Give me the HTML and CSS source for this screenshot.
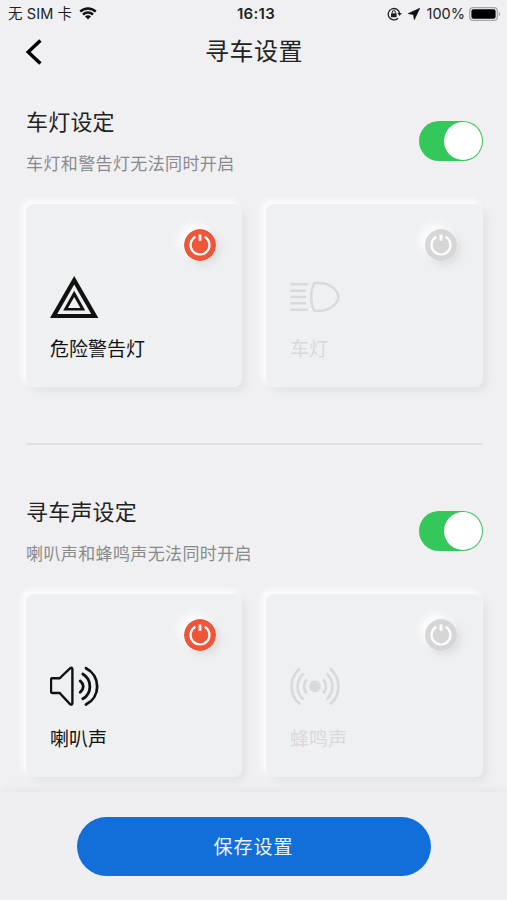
FILE: index.html
```
<!DOCTYPE html>
<html lang="zh-CN">

<head>
    <meta charset="UTF-8">
    <meta name="viewport" content="width=device-width, initial-scale=1.0">
    <title>寻车设置</title>

    <link rel="stylesheet" href="styles.css">
</head>

<body>
    <svg class="defs">
        <symbol id="power" viewBox="0 0 32 32">
            <circle cx="16" cy="16" r="16" fill="currentColor" />
            <path class="ring" d="M11.4 7.7a9.5 9.5 0 1 0 9.2 0" />
            <path class="bar" d="M16 5.4v6.4" />
        </symbol>
    </svg>

    <div class="status">
        <div class="left">
            <span>无 SIM 卡</span>
            <svg class="wifi" width="18" height="13" viewBox="0 0 18 13">
                <path d="M1.2 4.7a11 11 0 0 1 15.6 0M4 7.6a7 7 0 0 1 10 0" fill="none" stroke="#111" stroke-width="2.4" />
                <path d="M9 12.6L6 9.6a4.2 4.2 0 0 1 6 0z" fill="#111" />
            </svg>
        </div>
        <div class="time">16:13</div>
        <div class="right">
            <svg class="lock" width="15" height="14" viewBox="0 0 15 14">
                <path d="M12.5 6A5.7 5.7 0 1 0 11 11.2" fill="none" stroke="#222" stroke-width="1.3" />
                <path d="M10.4 6h4.4l-2.2 3z" fill="#222" />
                <rect x="4" y="6.2" width="5.6" height="4.1" rx=".5" fill="#222" />
                <path d="M5.2 6.4V5.2a1.6 1.6 0 0 1 3.2 0v1.2" fill="none" stroke="#222" />
            </svg>
            <svg class="locate" width="12" height="12" viewBox="0 0 12 12">
                <path d="M11.6.4L.4 5.6l5.2.9.7 5.1z" fill="#111" stroke="#111" stroke-width=".8" stroke-linejoin="round" />
            </svg>
            <span>100%</span>
            <svg class="battery" width="32" height="14" viewBox="0 0 32 14">
                <rect x=".7" y=".7" width="27.6" height="12.6" rx="3.4" fill="none" stroke="#a5a5a8" stroke-width="1.2" />
                <rect x="2.4" y="2.3" width="24.2" height="9.4" rx="2" fill="#000" />
                <path d="M29.8 4.8v4.4q1.4-.6 1.4-2.2t-1.4-2.2z" fill="#a5a5a8" />
            </svg>
        </div>
    </div>

    <div class="nav">
        <a href="javascript:;" class="back">
            <svg width="18" height="28" viewBox="0 0 18 28">
                <path d="M16.4 2.6L4.2 14l12.2 11.4" fill="none" stroke="#000" stroke-width="3.4" />
            </svg>
        </a>
        <h1>寻车设置</h1>
    </div>

    <div class="main">
        <div class="section">
            <div class="head">
                <div>
                    <h2>车灯设定</h2>
                    <p>车灯和警告灯无法同时开启</p>
                </div>
                <div class="switch"></div>
            </div>
            <ul class="cards">
                <li class="on">
                    <svg class="power"><use href="#power" /></svg>
                    <svg class="icon" viewBox="0 0 50 50">
                        <path d="M24.2 4L48.4 46H0zM24.2 12.4L7.2 42h34zM24.2 18.8L35.2 38.4H13.2zM24.2 25L18 36h12.4z" fill="currentColor" fill-rule="evenodd" />
                    </svg>
                    <span>危险警告灯</span>
                </li>
                <li>
                    <svg class="power"><use href="#power" /></svg>
                    <svg class="icon line" viewBox="0 0 50 50">
                        <path class="thick" d="M.3 12.3H18M.3 18.7H16.2M.3 25H16.2M.3 31.3H16.2M.3 37.7H18" />
                        <path d="M24.5 11H30C40 11 48.4 19 48.4 25S40 38.8 30 38.8H24.5C22.5 36 21.3 31 21.3 25S22.5 14 24.5 11z" />
                    </svg>
                    <span>车灯</span>
                </li>
            </ul>
        </div>

        <div class="section">
            <div class="head">
                <div>
                    <h2>寻车声设定</h2>
                    <p>喇叭声和蜂鸣声无法同时开启</p>
                </div>
                <div class="switch"></div>
            </div>
            <ul class="cards">
                <li class="on">
                    <svg class="power"><use href="#power" /></svg>
                    <svg class="icon line" viewBox="0 0 50 50">
                        <path d="M2.4 16.3H9.6L20.2 6.2Q22.4 4.8 22.4 7.2V41Q22.4 43.4 20.2 42.2L9.6 31H2.4Q1 31 1 29.6V17.7Q1 16.3 2.4 16.3z" />
                        <path class="round" d="M30.2 18.9Q36.4 24.4 30.2 30.2M32.8 12A14.4 14.4 0 0 1 32.8 36.8M36 6.2A20.4 20.4 0 0 1 36 42.6" />
                    </svg>
                    <span>喇叭声</span>
                </li>
                <li>
                    <svg class="power"><use href="#power" /></svg>
                    <svg class="icon line" viewBox="0 0 50 50">
                        <circle cx="25" cy="24.4" r="5.8" fill="currentColor" stroke="none" />
                        <path class="thick" d="M10 6.6A23 23 0 0 0 10 42.2M13.6 11.4A17 17 0 0 0 13.6 37.4M17 17.4A10 10 0 0 0 17 31.4" />
                        <path class="thick" d="M40 6.6A23 23 0 0 1 40 42.2M36.4 11.4A17 17 0 0 1 36.4 37.4M33 17.4A10 10 0 0 1 33 31.4" />
                    </svg>
                    <span>蜂鸣声</span>
                </li>
            </ul>
        </div>
    </div>

    <div class="footer">
        <a href="javascript:;" class="save">保存设置</a>
    </div>
</body>

</html>
```
FILE: styles.css
```
* {
    margin: 0;
    padding: 0;
    box-sizing: border-box
}

body {
    height: 900px;
    display: flex;
    flex-direction: column;
    overflow: hidden;
    background: #f0f0f2;
    color: #222;
    font-family: Inter, "Noto Sans CJK SC", sans-serif;
}

ul {
    list-style: none
}

a {
    color: inherit;
    text-decoration: none
}

h1,
h2 {
    font-weight: 400
}

svg {
    display: block;
    flex: none
}

.defs {
    position: absolute;
    width: 0;
    height: 0
}

/* 状态栏 */
.status {
    height: 27px;
    padding: 0 8px;
    display: grid;
    grid-template-columns: 1fr auto 1fr;
    align-items: center;
    font-size: 14.5px;
    line-height: 27px;
    white-space: nowrap;
}

.status .left,
.status .right {
    display: flex;
    align-items: center
}

.status .left {
    letter-spacing: .1px
}

.status .right {
    justify-content: flex-end
}

.wifi {
    margin-left: 7px
}

.time {
    padding-left: 5px;
    font-weight: 600;
    font-size: 15px;
    letter-spacing: .3px;
}

.lock {
    margin-right: -1px
}

.locate {
    margin: 0 7px
}

.battery {
    margin: 0 -2px 0 4px
}

/* 标题 */
.nav {
    height: 49px;
    padding: 0 24px;
    display: grid;
    grid-template-columns: 18px 1fr 18px;
    align-items: center;
}

.nav h1 {
    padding-left: 1px;
    text-align: center;
    font-size: 24px;
    line-height: 48px;
    letter-spacing: .5px;
}

.main {
    flex: 1;
    padding: 0 24px 0 26px
}

.section {
    height: 367px;
    padding-top: 28px
}

.section+.section {
    height: auto;
    padding-top: 50px;
    border-top: 2px solid #e1e1e4
}

.section:last-child .head {
    margin-top: -1px
}

.head {
    height: 100px;
    display: flex;
    justify-content: space-between
}

.head h2 {
    font-size: 22px;
    line-height: 36px;
    letter-spacing: .2px;
}

.head p {
    margin-top: 9px;
    font-size: 17px;
    line-height: 30px;
    letter-spacing: .38px;
    color: #8a8a8d;
}

.switch {
    width: 64px;
    height: 40px;
    margin-top: 17px;
    padding: 1px;
    border-radius: 20px;
    background: #34c759;
}

.switch::after {
    content: "";
    display: block;
    width: 38px;
    height: 38px;
    margin-left: auto;
    border-radius: 50%;
    background: #fff;
}

.cards {
    display: grid;
    grid-template-columns: 216px 217px;
    gap: 24px
}

.cards li {
    height: 183px;
    padding: 25px 26px 0 24px;
    border-radius: 8px;
    background: #eff0f2;
    box-shadow: -4px -4px 4px 1px #fafafb, 5px 5px 6px #e4e5e7;
    color: #d9d9db;
}

.cards .on {
    color: #111
}

.cards span {
    display: block;
    margin-top: 15px;
    font-size: 19px;
    line-height: 26px;
}

.power {
    width: 32px;
    height: 32px;
    margin-left: auto;
    border-radius: 50%;
    color: #d6d6d7;
    box-shadow: -5px -5px 8px #fdfdfd, 4px 4px 8px #dddee0;
}

.on .power {
    color: #ee5539
}

.ring,
.bar {
    fill: none;
    stroke: #fff;
    stroke-width: 2.2
}

.bar {
    stroke-width: 2.8
}

.icon {
    width: 50px;
    height: 50px;
    margin-top: 11px;
}

.line {
    fill: none;
    stroke: currentColor;
    stroke-width: 2.4
}

.thick {
    stroke-width: 2.6
}

.round {
    stroke-width: 2.8;
    stroke-linecap: round
}

.footer {
    height: 108px;
    padding-top: 25px;
    position: relative;
    background: #efeff1;
    box-shadow: 0 -3px 8px #e7e7e9;
}

.save {
    display: block;
    width: 354px;
    height: 59px;
    margin: 0 auto;
    border-radius: 30px;
    background: #126fd9;
    color: #eef5fd;
    font-size: 19px;
    line-height: 61px;
    letter-spacing: 1px;
    text-align: center;
}
```
